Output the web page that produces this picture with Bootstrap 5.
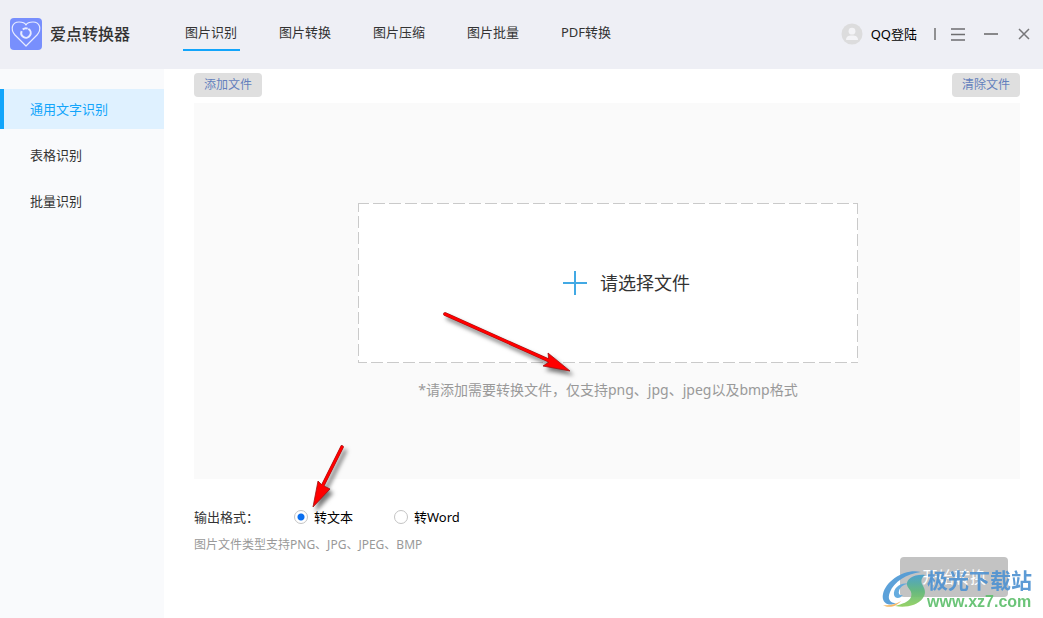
<!DOCTYPE html>
<html lang="zh-CN">
<head>
<meta charset="utf-8">
<meta name="viewport" content="width=device-width, initial-scale=1">
<title>爱点转换器</title>
<link href="https://cdn.jsdelivr.net/npm/bootstrap@5.3.0/dist/css/bootstrap.min.css" rel="stylesheet">
<style>
  body { font-family: "Noto Sans", "Noto Sans CJK SC", sans-serif; font-size: 13px; line-height: 20px; color: #333; }
  .topbar { height: 69px; background: #eeeff5; padding: 0 11px 2px 10px; }
  .brand-name { font-size: 16px; font-weight: 500; line-height: 24px; color: #333; width: 141px; padding-left: 8px; }
  .tabs { gap: 37px; }
  .tab-link { min-width: 57px; padding: 6px 2px 7px; border-bottom: 2px solid transparent; color: #333; text-decoration: none; white-space: nowrap; }
  .tab-link.active { border-color: #12a5fb; }
  .login { color: #000; gap: 8px; }
  .divider { width: 2px; height: 12px; background: #909092; margin: 0 14px 0 17px; }
  .win-btns { gap: 17px; }
  .win-btn { width: 16px; height: 16px; }
  .side { width: 164px; background: #f9fafc; padding-top: 20px; gap: 6px; }
  .side-link { height: 40px; padding-left: 26px; border-left: 4px solid transparent; color: #333; text-decoration: none; }
  .side-link.active { background: #dff1ff; border-color: #12a5fb; color: #12a5fb; }
  .content { padding: 4px 23px 21px 30px; }
  .tool-btn { width: 68px; height: 24px; background: #dfdfdf; color: #647fbd; font-size: 12px; line-height: 24px; border-radius: 4px; }
  .panel { min-height: 376px; margin-top: 6px; padding: 100px 0 0 2px; background: #fafafa; }
  .drop { width: 500px; max-width: 100%; height: 160px; padding-left: 42px; gap: 12px; border: 0; color: #333; font-size: 18px; background-color: #fff;
    background-image:
      repeating-linear-gradient(90deg, #cacaca 0 12px, transparent 12px 16px),
      repeating-linear-gradient(90deg, #cacaca 0 12px, transparent 12px 16px),
      repeating-linear-gradient(0deg, #cacaca 0 12px, transparent 12px 16px),
      repeating-linear-gradient(0deg, #cacaca 0 12px, transparent 12px 16px);
    background-size: 528px 1px, 528px 1px, 1px 192px, 1px 192px;
    background-position: -1px 0, -3px 100%, 0 -7px, 100% -5px;
    background-repeat: no-repeat; }
  .hint { margin-top: 17px; font-size: 14px; color: #999; }
  .arrow-a { left: 80px; top: 104px; pointer-events: none; }
  .arrow-b { left: 8px; bottom: 8px; pointer-events: none; }
  .formats { margin-top: 28px; }
  .formats-label, .choice { width: 100px; }
  .choice { gap: 6px; color: #000; }
  .choice input { width: 14px; height: 14px; margin: 0; flex: none; box-shadow: none; border: 1px solid #c4c4c4; }
  .choice input:checked { background: #fff radial-gradient(circle, #0a6ff0 0 3px, #fff 4px); border-color: #c4c4c4; }
  .note { margin-top: 8px; font-size: 12px; color: #999; }
  .start-btn { width: 108px; height: 40px; margin-right: 12px; background: #c3c3c3; color: #fff; font-size: 16px; border-radius: 4px; }
  .stamp { right: 11px; bottom: 6px; opacity: .92; pointer-events: none; }
  .stamp-name { font-size: 21px; font-weight: 700; line-height: 24px; color: #5093d2; }
  .stamp-url { font-family: "Liberation Sans", Arial, sans-serif; font-size: 16px; font-weight: 700; line-height: 20px; color: #5fbf6d; }
</style>
</head>
<body class="min-vh-100 d-flex flex-column position-relative">
<header class="topbar d-flex align-items-center">
  <svg width="32" height="32" viewBox="0 0 32 32" fill="none" stroke="#e8ecff" aria-hidden="true">
    <rect width="32" height="32" rx="4" fill="#788ffd" stroke="none"/>
    <path d="M16 28 5 17C0 11 2 4 9 4c3 0 6 1 7 3 1-2 4-3 7-3 7 0 9 7 4 13Z" stroke-width="1.2" stroke-linejoin="round"/>
    <circle cx="16" cy="15" r="4.700" stroke-width="2" stroke-dasharray="21 2 5 1.500" transform="rotate(-60 16 15)"/>
  </svg>
  <div class="brand-name text-nowrap">爱点转换器</div>
  <nav class="tabs d-flex">
    <a class="tab-link active" href="#" aria-current="page">图片识别</a>
    <a class="tab-link" href="#">图片转换</a>
    <a class="tab-link" href="#">图片压缩</a>
    <a class="tab-link" href="#">图片批量</a>
    <a class="tab-link" href="#">PDF转换</a>
  </nav>
  <div class="d-flex align-items-center ms-auto">
    <a class="login d-flex align-items-center text-decoration-none text-nowrap" href="#">
      <svg width="22" height="22" viewBox="0 0 22 22" aria-hidden="true">
        <circle cx="11" cy="11" r="10.500" fill="#dcdcdd"/>
        <circle cx="11" cy="8.200" r="3.400" fill="#f3f3f6"/>
        <path d="M5 17c0-3.200 2-4.500 6-4.500s6 1.300 6 4.500Z" fill="#f3f3f6"/>
      </svg>
      <span>QQ登陆</span>
    </a>
    <span class="divider"></span>
    <div class="win-btns d-flex align-items-center">
      <button class="win-btn btn p-0 border-0 d-flex" aria-label="菜单"><svg width="16" height="16" stroke="#6e6e70" stroke-width="2"><path d="M1 3h14M1 8.500h14M1 14h14" stroke-width="1.600"/></svg></button>
      <button class="win-btn btn p-0 border-0 d-flex" aria-label="最小化"><svg width="16" height="16" stroke="#88888a" stroke-width="2"><path d="M1 8h14"/></svg></button>
      <button class="win-btn btn p-0 border-0 d-flex" aria-label="关闭"><svg width="16" height="16" stroke="#77777a" stroke-width="1.500"><path d="M3 3l10 10M13 3 3 13"/></svg></button>
    </div>
  </div>
</header>

<div class="d-flex flex-grow-1">
  <nav class="side d-flex flex-column flex-shrink-0">
    <a class="side-link active d-flex align-items-center" href="#" aria-current="page">通用文字识别</a>
    <a class="side-link d-flex align-items-center" href="#">表格识别</a>
    <a class="side-link d-flex align-items-center" href="#">批量识别</a>
  </nav>
  <main class="content flex-grow-1 d-flex flex-column">
    <div class="d-flex justify-content-between">
      <button class="tool-btn btn p-0 border-0">添加文件</button>
      <button class="tool-btn btn p-0 border-0">清除文件</button>
    </div>
    <section class="panel d-flex flex-column align-items-center">
      <div class="position-relative">
        <button class="drop d-flex align-items-center justify-content-center">
          <svg width="26" height="26" stroke="#42a9e4" stroke-width="2" aria-hidden="true"><path d="M13 1v24M1 13h24"/></svg>
          <span>请选择文件</span>
        </button>
        <svg class="arrow-a position-absolute" width="144" height="80" viewBox="0 0 144 80" aria-hidden="true">
          <g style="filter: drop-shadow(3px 4px 2px #0008)">
            <path d="M7 7 112 54" stroke="#a01010" stroke-width="3.600" stroke-linecap="round"/>
            <path d="m110 46 22 18-27-5 6-4Z" fill="#f00" stroke="#a01010" stroke-width=".8"/>
            <path d="M7 7 113 54.500" stroke="#f00" stroke-width="2.600" stroke-linecap="round"/>
          </g>
        </svg>
      </div>
      <p class="hint mb-0 text-center">*请添加需要转换文件，仅支持png、jpg、jpeg以及bmp格式</p>
    </section>
    <div class="formats d-flex" role="radiogroup" aria-label="输出格式">
      <span class="formats-label">输出格式：</span>
      <label class="choice d-flex align-items-center position-relative" for="fmt-text">
        <input class="form-check-input" type="radio" name="fmt" id="fmt-text" checked>转文本
        <svg class="arrow-b position-absolute" width="60" height="80" viewBox="0 0 60 80" aria-hidden="true">
          <g style="filter: drop-shadow(3px 4px 2px #0008)">
            <path d="M40 8 21 46" stroke="#a01010" stroke-width="3.600" stroke-linecap="round"/>
            <path d="m16 42 4 4 8 4-17 18Z" fill="#f00" stroke="#a01010" stroke-width=".8"/>
            <path d="M40 8 20 48" stroke="#f00" stroke-width="2.600" stroke-linecap="round"/>
          </g>
        </svg>
      </label>
      <label class="choice d-flex align-items-center" for="fmt-word">
        <input class="form-check-input" type="radio" name="fmt" id="fmt-word">转Word
      </label>
    </div>
    <p class="note mb-0">图片文件类型支持PNG、JPG、JPEG、BMP</p>
    <div class="d-flex justify-content-end mt-auto">
      <button class="start-btn btn p-0 border-0">开始转换</button>
    </div>
  </main>
</div>

<div class="stamp position-absolute d-flex align-items-center">
  <svg width="46" height="42" viewBox="0 0 46 42" aria-hidden="true">
    <defs>
      <linearGradient id="leaf" x2="0" y2="1"><stop stop-color="#459fd0"/><stop offset=".5" stop-color="#5fb87c"/><stop offset="1" stop-color="#8fcf5a"/></linearGradient>
    </defs>
    <path d="M40 3C25-1 5 11 2 25c-2 9 6 13 13 9-6 0-9-4-6-11C13 13 25 5 40 3Z" fill="#4f9ad6"/>
    <path d="M27 15c-7-2-15 4-14 11 1 4 6 4 9 0-3 1-5-1-4-4 1-4 5-7 9-7Z" fill="#5aa6dd"/>
    <path d="M44 6C33 5 25 10 26 16c1 4 6 6 4 12-2 5-9 7-16 9 10 2 22 0 28-8 4-6 1-10-1-14-1-3-1-6 3-9Z" fill="url(#leaf)"/>
    <path d="M2 36c7 1 13-1 18-4-4 5-12 8-18 4Z" fill="#f3b45c"/>
  </svg>
  <div>
    <div class="stamp-name">极光下载站</div>
    <div class="stamp-url">www.xz7.com</div>
  </div>
</div>
<script src="https://cdn.jsdelivr.net/npm/bootstrap@5.3.0/dist/js/bootstrap.bundle.min.js"></script>
</body>
</html>
